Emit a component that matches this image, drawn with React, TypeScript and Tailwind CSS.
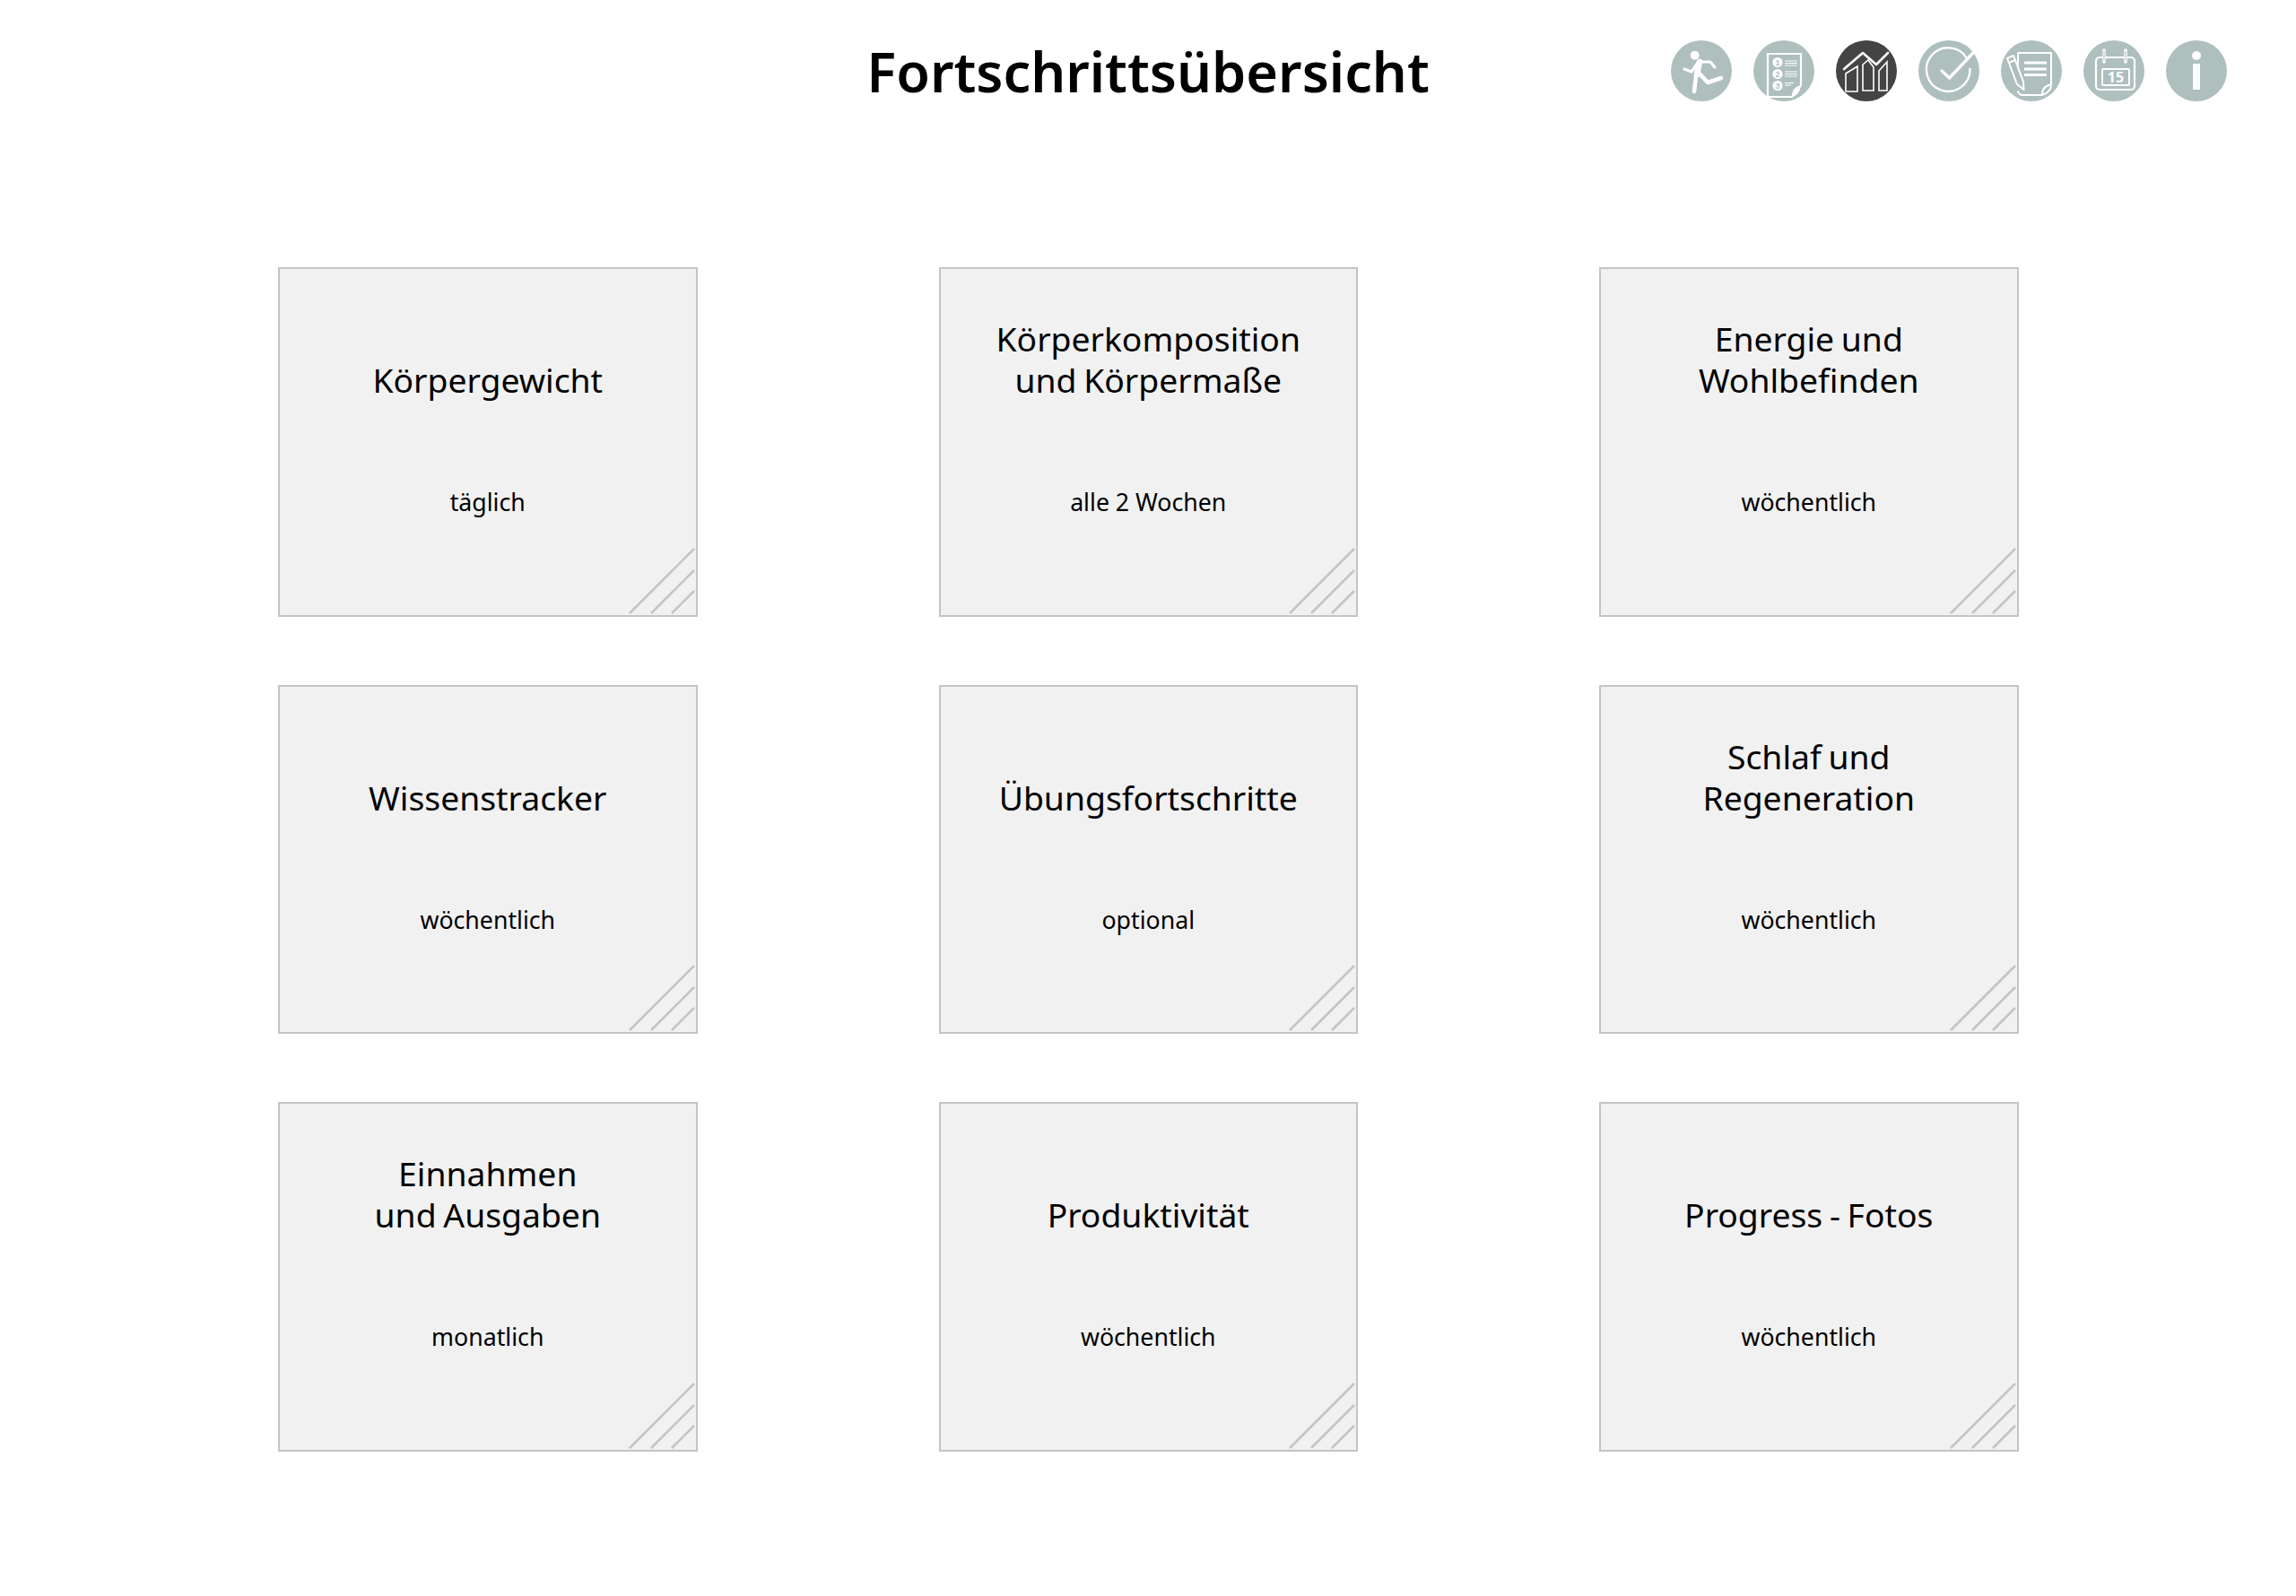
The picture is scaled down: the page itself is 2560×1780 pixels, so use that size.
const cards = [
  { t: ["Körpergewicht"], s: "täglich" },
  { t: ["Körperkomposition", "und Körpermaße"], s: "alle 2 Wochen" },
  { t: ["Energie und", "Wohlbefinden"], s: "wöchentlich" },
  { t: ["Wissenstracker"], s: "wöchentlich" },
  { t: ["Übungsfortschritte"], s: "optional" },
  { t: ["Schlaf und", "Regeneration"], s: "wöchentlich" },
  { t: ["Einnahmen", "und Ausgaben"], s: "monatlich" },
  { t: ["Produktivität"], s: "wöchentlich" },
  { t: ["Progress - Fotos"], s: "wöchentlich" },
];

function Circle({ dark, children }: { dark?: boolean; children: React.ReactNode }) {
  return (
    <svg width="68" height="68" viewBox="0 0 68 68" fill="none" stroke="#fff" strokeLinecap="round" strokeLinejoin="round">
      <circle cx="34" cy="34" r="34" fill={dark ? "#444444" : "#aebfbd"} stroke="none" />
      {children}
    </svg>
  );
}

const C = "#aebfbd";

const icons = [
  <Circle key="run">
    <circle cx="26.7" cy="16.7" r="5" fill="#fff" stroke="none" />
    <path d="M33 24 H44 L49 30" strokeWidth="3.2" />
    <path d="M30 25 L23 35 L15 32" strokeWidth="3.2" />
    <path d="M32 24 L29 38" strokeWidth="6.5" />
    <path d="M30 35 L41 47 L56 42" strokeWidth="4.6" />
    <path d="M28 40 L26 57" strokeWidth="4.6" />
  </Circle>,
  <Circle key="list">
    <path d="M16 15 H53 V50 L43 63 H16 Z" strokeWidth="2.2" strokeLinejoin="miter" />
    <path d="M43 63 C43 55 46 52 53 50 C52 57 49 62 43 63 Z" fill="#fff" stroke="none" />
    <circle cx="27" cy="24.5" r="5.6" fill="#fff" stroke="none" />
    <circle cx="27" cy="37.5" r="5.6" fill="#fff" stroke="none" />
    <circle cx="27" cy="50.5" r="5.6" fill="#fff" stroke="none" />
    <g fill={C} stroke="none" fontSize="9" fontWeight="700" fontFamily="'Liberation Sans', sans-serif" textAnchor="middle">
      <text x="27" y="27.7">1</text>
      <text x="27" y="40.7">2</text>
      <text x="27" y="53.7">3</text>
    </g>
    <path d="M35 23 H49 M35 25.5 H49 M35 28 H49 M35 35 H49 M35 37.5 H49 M35 40 H49 M35 47.5 H45 M35 50 H42" strokeWidth="1" strokeLinecap="butt" />
  </Circle>,
  <Circle key="chart" dark>
    <path d="M9 32 L30 14 L45 27 L58 14" strokeWidth="2.6" />
    <path d="M11 57 V37 L24 29 V57 Z M30 56 V27 L36 22 L42 30 V56 Z M48 56 V34 L57 24 V56 Z" strokeWidth="1.6" strokeLinejoin="miter" />
  </Circle>,
  <Circle key="check">
    <path d="M54 20 A24.3 24.3 0 1 0 57.5 32" strokeWidth="2.4" />
    <path d="M26 34 L34.5 42 L61 14" strokeWidth="3.4" />
  </Circle>,
  <Circle key="notes">
    <path d="M19 14 H56 V49 C56 56 50 61 44 61 H24 C22 61 20 60 19 57 M19 14 V36" strokeWidth="2" />
    <path d="M46 61 C46 54 49 51 56 49" strokeWidth="2" />
    <path d="M26 25 H51 M26 32 H51 M26 38.5 H51" strokeWidth="3" strokeLinecap="butt" />
    <path d="M7 20 L14 17 L25 46 L25.5 55 L18 49 Z M9 25 L16 22" strokeWidth="2" fill={C} />
  </Circle>,
  <Circle key="cal">
    <rect x="14" y="19" width="43" height="36" rx="4" strokeWidth="2.2" />
    <rect x="21" y="32" width="30" height="18" rx="1" strokeWidth="2" />
    <path d="M23 11 V24 M47 11 V24" stroke="#fff" strokeWidth="3.4" />
    <path d="M23 12.5 V22.5 M47 12.5 V22.5" stroke={C} strokeWidth="1" />
    <text x="36" y="46.5" fill="#fff" stroke="none" fontSize="16" fontWeight="700" textAnchor="middle" fontFamily="'Open Sans', sans-serif">15</text>
  </Circle>,
  <Circle key="info">
    <circle cx="34" cy="17" r="5" fill="#fff" stroke="none" />
    <rect x="30" y="26" width="8" height="29" fill="#fff" stroke="none" />
  </Circle>,
];

function Hatch() {
  return (
    <svg className="absolute right-0 bottom-0" width="76" height="77" viewBox="0 0 76 77" fill="none" stroke="#c4c4c4" strokeWidth="2.6">
      <path d="M2 75 L74 3 M26 75 L74 27 M49 75 L74 50" />
    </svg>
  );
}

export default function App() {
  return (
    <div className="w-[2560px] h-[1780px] bg-white text-black [font-family:'Noto_Sans',sans-serif]">
      <header className="relative h-[298px] pt-[45px]">
        <h1 className="text-center text-[61.2px] leading-[72px] font-semibold mt-[-1px]">Fortschrittsübersicht</h1>
        <div className="absolute top-[45px] left-[1863px] flex gap-6">{icons}</div>
      </header>
      <main className="grid grid-cols-[467.5px_467.5px_467.5px] gap-x-[269px] gap-y-[76px] pl-[310px]">
        {cards.map((c) => (
          <div key={c.s + c.t[0]} className="relative h-[389.5px] border-2 border-[#c4c4c4] bg-[#f1f1f1] flex flex-col items-center">
            <div className="h-[150px] mt-[-3px] flex flex-col justify-end text-[37.3px] leading-[46px] text-center [word-spacing:-2px]">
              {c.t.map((l) => (
                <div key={l}>{l}</div>
              ))}
            </div>
            <div className="mt-[96px] text-[26.7px] leading-[34px]">{c.s}</div>
            <Hatch />
          </div>
        ))}
      </main>
    </div>
  );
}
